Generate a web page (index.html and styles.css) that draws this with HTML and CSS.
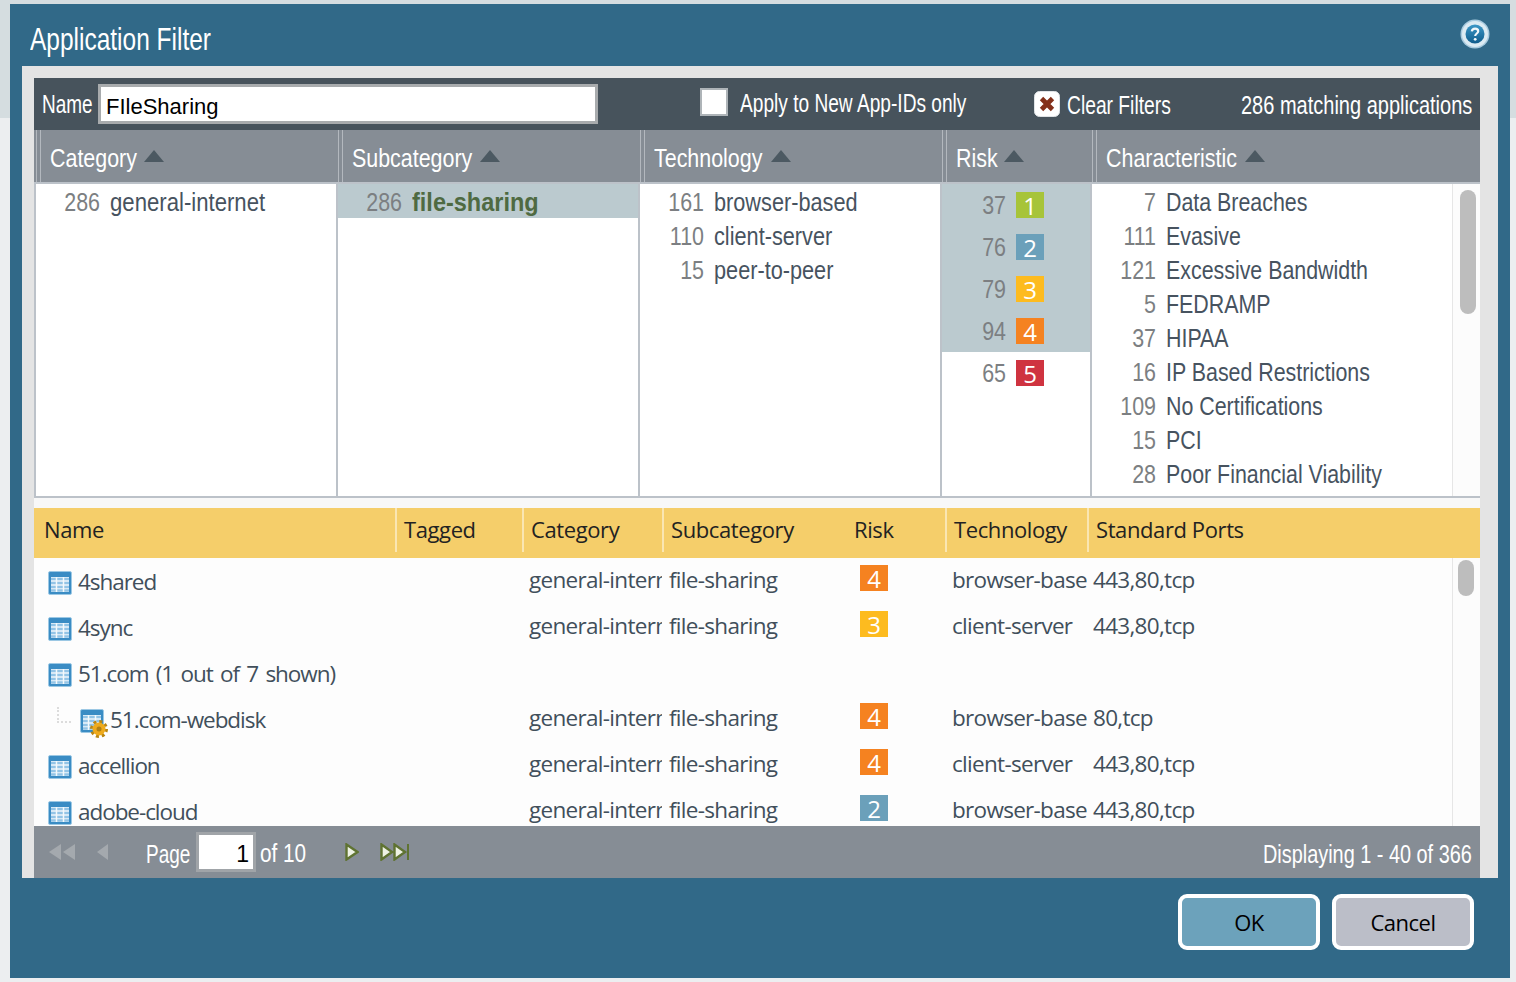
FILE: index.html
```html
<!DOCTYPE html>
<html lang="en">

<head>
    <meta charset="UTF-8">
    <title>Application Filter</title>
    <link rel="stylesheet" href="styles.css">
</head>

<body>
    <svg class="defs" width="0" height="0">
        <defs>
            <linearGradient id="help-fill" x1="0" y1="0" x2="0" y2="1">
                <stop offset="0" stop-color="#3c97c6"/>
                <stop offset="1" stop-color="#0f5c8c"/>
            </linearGradient>
        </defs>
        <symbol id="tbl" viewBox="0 0 24 24">
            <rect x="0.5" y="0.5" width="23" height="23" rx="1.5" fill="#3a8cc4" stroke="#9cc8e4"/>
            <rect x="3" y="6" width="18" height="15" fill="#eef6fb"/>
            <path d="M3 8h18M3 12h18M3 16h18M3 19.500h18" stroke="#93c4e6" stroke-width="2.400"/>
            <path d="M8.500 6v15M15.500 6v15" stroke="#f4f9fc" stroke-width="1.500"/>
        </symbol>
    </svg>

    <div class="dialog">
        <div class="title-bar">
            <span class="title">Application Filter</span>
            <svg class="help" width="30" height="30" viewBox="0 0 30 30">
                <circle cx="15" cy="15" r="14.500" fill="#a9cbdf"/>
                <circle cx="15" cy="15" r="13" fill="#dcebf3"/>
                <circle cx="15" cy="15" r="9.500" fill="url(#help-fill)"/>
                <path d="M11.800 12.400c.3-2 1.600-2.800 3.300-2.800 1.800 0 3.100 1 3.100 2.600 0 2.300-3 2.300-3 4.800" fill="none" stroke="#f2f8fb" stroke-width="2.200"/>
                <circle cx="15.200" cy="20.300" r="1.400" fill="#f2f8fb"/>
            </svg>
        </div>

        <div class="dialog-body">
            <!-- filter toolbar -->
            <div class="toolbar">
                <span class="bar-label w-name">Name</span>
                <div class="name-input">FIleSharing</div>
                <span class="checkbox"></span>
                <span class="bar-label w-apply">Apply to New App-IDs only</span>
                <svg class="clear-icon" width="26" height="26" viewBox="0 0 26 26">
                    <rect x="0.500" y="0.500" width="25" height="25" rx="5" fill="#fff" stroke="#dfe3e6"/>
                    <path d="M7.500 7.500l11 11M18.500 7.500l-11 11" stroke="#84301a" stroke-width="4.800"/>
                </svg>
                <span class="bar-label w-clear">Clear Filters</span>
                <span class="bar-label w-match">286 matching applications</span>
            </div>

            <!-- filter browser -->
            <div class="browser-head">
                <div class="head-cell"><span class="head-label w-cat">Category</span><i class="sort"></i></div>
                <div class="head-cell"><span class="head-label w-sub">Subcategory</span><i class="sort"></i></div>
                <div class="head-cell"><span class="head-label w-tech">Technology</span><i class="sort"></i></div>
                <div class="head-cell"><span class="head-label w-risk">Risk</span><i class="sort"></i></div>
                <div class="head-cell"><span class="head-label w-char">Characteristic</span><i class="sort"></i></div>
            </div>
            <div class="browser">
                <div class="facet">
                    <div class="facet-row"><span class="count">286</span><span class="facet-name wide">general-internet</span></div>
                </div>
                <div class="facet">
                    <div class="facet-row picked first-pick"><span class="count">286</span><b class="picked-name">file-sharing</b></div>
                </div>
                <div class="facet">
                    <div class="facet-row"><span class="count">161</span><span class="facet-name">browser-based</span></div>
                    <div class="facet-row"><span class="count">110</span><span class="facet-name">client-server</span></div>
                    <div class="facet-row"><span class="count">15</span><span class="facet-name">peer-to-peer</span></div>
                </div>
                <div class="facet">
                    <div class="risk-row picked"><span class="count">37</span><span class="risk r1">1</span></div>
                    <div class="risk-row picked"><span class="count">76</span><span class="risk r2">2</span></div>
                    <div class="risk-row picked"><span class="count">79</span><span class="risk r3">3</span></div>
                    <div class="risk-row picked"><span class="count">94</span><span class="risk r4">4</span></div>
                    <div class="risk-row"><span class="count">65</span><span class="risk r5">5</span></div>
                </div>
                <div class="facet facet-scroll">
                    <div class="facet-list">
                        <div class="facet-row"><span class="count">7</span><span class="facet-name">Data Breaches</span></div>
                        <div class="facet-row"><span class="count">111</span><span class="facet-name">Evasive</span></div>
                        <div class="facet-row"><span class="count">121</span><span class="facet-name">Excessive Bandwidth</span></div>
                        <div class="facet-row"><span class="count">5</span><span class="facet-name">FEDRAMP</span></div>
                        <div class="facet-row"><span class="count">37</span><span class="facet-name">HIPAA</span></div>
                        <div class="facet-row"><span class="count">16</span><span class="facet-name">IP Based Restrictions</span></div>
                        <div class="facet-row"><span class="count">109</span><span class="facet-name">No Certifications</span></div>
                        <div class="facet-row"><span class="count">15</span><span class="facet-name">PCI</span></div>
                        <div class="facet-row"><span class="count">28</span><span class="facet-name">Poor Financial Viability</span></div>
                    </div>
                    <div class="gutter"><div class="thumb thumb-top"></div></div>
                </div>
            </div>

            <div class="spacer"></div>

            <!-- matching applications -->
            <div class="app-head">
                <div class="app-th">Name</div>
                <div class="app-th">Tagged</div>
                <div class="app-th">Category</div>
                <div class="app-th">Subcategory</div>
                <div class="app-th th-risk">Risk</div>
                <div class="app-th">Technology</div>
                <div class="app-th">Standard Ports</div>
            </div>
            <div class="app-rows">
                <div class="app-list">
                    <div class="app-row">
                        <div class="app-name"><svg class="tbl-icon"><use href="#tbl"/></svg>4shared</div>
                        <div></div>
                        <div class="clip">general-internet</div>
                        <div class="clip">file-sharing</div>
                        <div class="risk-cell"><span class="risk r4">4</span></div>
                        <div class="clip">browser-based</div>
                        <div class="ports">443,80,tcp</div>
                    </div>
                    <div class="app-row">
                        <div class="app-name"><svg class="tbl-icon"><use href="#tbl"/></svg>4sync</div>
                        <div></div>
                        <div class="clip">general-internet</div>
                        <div class="clip">file-sharing</div>
                        <div class="risk-cell"><span class="risk r3">3</span></div>
                        <div class="clip">client-server</div>
                        <div class="ports">443,80,tcp</div>
                    </div>
                    <div class="app-row">
                        <div class="app-name"><svg class="tbl-icon"><use href="#tbl"/></svg>51.com (1 out of 7 shown)</div>
                    </div>
                    <div class="app-row">
                        <div class="app-name child">
                            <span class="tree-line"></span>
                            <span class="icon-wrap">
                                <svg class="tbl-icon"><use href="#tbl"/></svg>
                                <svg class="gear" width="18" height="18" viewBox="0 0 18 18">
                                    <circle cx="9" cy="9" r="7.500" fill="none" stroke="#b98510" stroke-width="3" stroke-dasharray="3 2.900"/>
                                    <circle cx="9" cy="9" r="6.500" fill="#eeaa1c"/>
                                    <circle cx="9" cy="9" r="2.500" fill="#b07f14"/>
                                </svg>
                            </span>51.com-webdisk
                        </div>
                        <div></div>
                        <div class="clip">general-internet</div>
                        <div class="clip">file-sharing</div>
                        <div class="risk-cell"><span class="risk r4">4</span></div>
                        <div class="clip">browser-based</div>
                        <div class="ports">80,tcp</div>
                    </div>
                    <div class="app-row">
                        <div class="app-name"><svg class="tbl-icon"><use href="#tbl"/></svg>accellion</div>
                        <div></div>
                        <div class="clip">general-internet</div>
                        <div class="clip">file-sharing</div>
                        <div class="risk-cell"><span class="risk r4">4</span></div>
                        <div class="clip">client-server</div>
                        <div class="ports">443,80,tcp</div>
                    </div>
                    <div class="app-row">
                        <div class="app-name"><svg class="tbl-icon"><use href="#tbl"/></svg>adobe-cloud</div>
                        <div></div>
                        <div class="clip">general-internet</div>
                        <div class="clip">file-sharing</div>
                        <div class="risk-cell"><span class="risk r2">2</span></div>
                        <div class="clip">browser-based</div>
                        <div class="ports">443,80,tcp</div>
                    </div>
                </div>
                <div class="gutter"><div class="thumb thumb-apps"></div></div>
            </div>

            <!-- pager -->
            <div class="pager">
                <svg class="pg-first" width="28" height="16" viewBox="0 0 28 16">
                    <path d="M13 0v16L1 8zM27 0v16L15 8z" fill="#a4a9ae"/>
                </svg>
                <svg class="pg-prev" width="12" height="16" viewBox="0 0 12 16">
                    <path d="M11 0v16L0 8z" fill="#a4a9ae"/>
                </svg>
                <span class="bar-label w-page">Page</span>
                <div class="pg-input">1</div>
                <span class="bar-label w-of">of 10</span>
                <svg class="pg-next" width="14" height="18" viewBox="0 0 14 18">
                    <path d="M1.500 1.500v15L12.500 9z" fill="#eef2e4" stroke="#5f7332" stroke-width="2.400"/>
                </svg>
                <svg class="pg-last" width="30" height="18" viewBox="0 0 30 18">
                    <path d="M1.500 1.500v15L12 9zM14.500 1.500v15L25 9z" fill="#eef2e4" stroke="#5f7332" stroke-width="2.400"/>
                    <path d="M28 1v16" stroke="#5f7332" stroke-width="2"/>
                </svg>
                <span class="bar-label w-total">Displaying 1 - 40 of 366</span>
            </div>
        </div>

        <div class="footer">
            <button class="btn btn-ok">OK</button>
            <button class="btn btn-cancel">Cancel</button>
        </div>
    </div>
</body>

</html>
```

FILE: styles.css
```css
/* page */
body {
    margin: 0;
    height: 982px;
    overflow: hidden;
    background: linear-gradient(#d5dde0 118px, #eceef0 118px);
    font-family: "Open Sans", "Liberation Sans", sans-serif;
}

svg {
    flex: none;
}

.defs {
    position: absolute;
}

.dialog {
    width: 1500px;
    height: 974px;
    margin: 4px 0 0 10px;
    background: #316988;
    display: flex;
    flex-direction: column;
}

.title-bar {
    height: 62px;
    display: flex;
    align-items: center;
    justify-content: space-between;
    padding: 0 20px;
}

/* the squeezed text: layout width is set by hand, the glyphs are scaled to fit */
.title,
.bar-label,
.head-label,
.facet-name,
.picked-name,
.count {
    display: inline-block;
    font-family: "Liberation Sans", sans-serif;
    white-space: nowrap;
    transform-origin: left center;
}

.title {
    font-size: 32px;
    color: #fff;
    margin-top: 9px;
    transform: scaleX(.765);
}

.help {
    margin-top: -2px;
}

.dialog-body {
    margin-left: 12px;
    width: 1476px;
    height: 812px;
    box-sizing: border-box;
    padding: 12px 18px 0 12px;
    background: #e4e4e4;
    display: flex;
    flex-direction: column;
}

/* toolbar */
.toolbar {
    height: 52px;
    background: #47535c;
    display: flex;
    align-items: center;
    padding: 0 8px;
}

.bar-label {
    font-size: 25px;
    color: #fff;
    flex: none;
}

.w-name {
    width: 50px;
    transform: scaleX(.76);
}

.w-apply {
    width: 227px;
    margin: -2px 0 0 12px;
    transform: scaleX(.765);
}

.w-clear {
    width: 103px;
    margin: 3px 0 0 7px;
    transform: scaleX(.77);
}

.w-match {
    width: 231px;
    margin: 3px 0 0 auto;
    transform: scaleX(.8);
}

.name-input {
    width: 489px;
    height: 34px;
    margin-left: 6px;
    border: 3px solid #a8abad;
    background: #fff;
    font-family: "Liberation Sans", sans-serif;
    font-size: 22px;
    line-height: 40px;
    padding-left: 5px;
    color: #000;
}

.checkbox {
    width: 24px;
    height: 24px;
    margin: -4px 0 0 102px;
    background: #fff;
    border: 2px solid #aeb4b8;
    flex: none;
}

.clear-icon {
    margin-left: 67px;
}

/* filter browser */
.browser-head,
.browser {
    display: grid;
    grid-template-columns: 302px 302px 302px 150px 390px;
}

.browser-head {
    height: 52px;
    background: #868d95;
}

.head-cell {
    display: flex;
    align-items: center;
    padding-left: 16px;
    background: linear-gradient(to right, transparent 2px, #b3b8be 2px, #b3b8be 3px, transparent 3px, transparent 6px, #b3b8be 6px, #b3b8be 7px, transparent 7px);
}

.head-label {
    font-size: 25px;
    color: #fff;
    margin-top: 4px;
    transform: scaleX(.857);
}

.w-cat { width: 86px; }
.w-sub { width: 120px; }
.w-tech { width: 109px; }
.w-risk { width: 40px; }
.w-char { width: 131px; }

.sort {
    width: 0;
    height: 0;
    margin: 0 0 0 8px;
    border-left: 10px solid transparent;
    border-right: 10px solid transparent;
    border-bottom: 12px solid #4c5962;
}

.browser {
    height: 316px;
    box-sizing: border-box;
    background: #fff;
    border-top: 2px solid #bcc2c9;
    border-bottom: 2px solid #bcc2c9;
}

.facet {
    border-left: 2px solid #bcc2c9;
    font-size: 25px;
    color: #47535f;
}

.facet-row,
.risk-row {
    display: flex;
    align-items: center;
    height: 34px;
}

.risk-row {
    height: 42px;
}

.count {
    width: 64px;
    margin-right: 10px;
    text-align: right;
    color: #7c7f82;
    transform: scaleX(.857);
    transform-origin: right center;
    flex: none;
}

.facet-name,
.picked-name {
    transform: scaleX(.868);
}

.facet-list .facet-name {
    transform: scaleX(.855);
}

.facet-name.wide {
    transform: scaleX(.886);
}

.facet-row .count,
.facet-name,
.picked-name {
    margin-top: 3px;
}

.picked {
    background: #bbcacf;
}

.picked-name {
    color: #4f6a42;
    transform: scaleX(.94);
}

.risk {
    display: inline-block;
    width: 28px;
    height: 26px;
    line-height: 28px;
    text-align: center;
    color: #fff;
    font-family: "Open Sans", sans-serif;
    font-size: 24px;
    letter-spacing: 0;
}

.r1 { background: #a7c439; }
.r2 { background: #6ba0ba; }
.r3 { background: #fdbb1f; }
.r4 { background: #f58220; }
.r5 { background: #cf3340; }

.facet-scroll {
    display: flex;
}

.facet-list {
    flex: 1;
}

.gutter {
    width: 27px;
    flex: none;
    border-left: 1px solid #e6e6e6;
    background: #fcfcfc;
}

.thumb {
    width: 16px;
    margin-left: 7px;
    background: #bdbdbd;
    border-radius: 8px;
}

.thumb-top {
    height: 124px;
    margin-top: 6px;
}

.thumb-apps {
    height: 36px;
    margin: 2px 0 0 5px;
}

.spacer {
    height: 10px;
    background: #f8f8f8;
}

/* application table */
.app-head,
.app-row {
    display: grid;
    grid-template-columns: 361px 127px 140px 143px 140px 142px 365px;
}

.app-head {
    height: 50px;
    background: #f5ce6a;
    font-size: 22px;
    letter-spacing: -.4px;
    color: #222;
}

.app-th {
    padding-left: 7px;
    line-height: 42px;
    height: 44px;
    border-left: 2px solid #fae6b2;
    box-sizing: border-box;
}

.app-th:first-child {
    border-left: none;
    padding-left: 10px;
}

.th-risk {
    border-left: none;
    padding-left: 49px;
}

.app-rows {
    height: 268px;
    display: flex;
    overflow: hidden;
    background: #fdfdfd;
}

.app-list {
    width: 1418px;
    flex: none;
    margin-top: -2px;
    font-size: 22.500px;
    letter-spacing: -.7px;
    word-spacing: 2.500px;
    color: #414f5b;
}

.app-row {
    height: 46px;
    align-items: center;
    white-space: nowrap;
}

.app-name {
    display: flex;
    align-items: center;
    padding: 4px 0 0 14px;
    letter-spacing: -1.050px;
}

.clip {
    overflow: hidden;
    padding-left: 7px;
}

.ports {
    padding-left: 6px;
}

.risk-cell {
    padding-left: 55px;
}

.tbl-icon {
    width: 24px;
    height: 24px;
    margin: 4px 6px 0 0;
}

.child {
    padding-left: 23px;
}

.tree-line {
    width: 14px;
    height: 16px;
    margin: -8px 9px 0 0;
    border-left: 2px dotted #dcdcdc;
    border-bottom: 2px dotted #dcdcdc;
    box-sizing: border-box;
}

.icon-wrap {
    position: relative;
    display: flex;
}

.gear {
    position: absolute;
    left: 10px;
    top: 15px;
}

/* pager */
.pager {
    height: 52px;
    background: #868d95;
    display: flex;
    align-items: center;
    padding: 0 8px 0 14px;
}

.pg-prev {
    margin-left: 21px;
}

.w-page {
    width: 44px;
    margin: 4px 0 0 37px;
    transform: scaleX(.76);
}

.pg-input {
    width: 50px;
    height: 34px;
    margin-left: 6px;
    border: 3px solid #a0a4a8;
    background: #fff;
    text-align: right;
    line-height: 38px;
    padding-right: 4px;
    font-family: "Liberation Sans", sans-serif;
    font-size: 23px;
    color: #000;
}

.w-of {
    width: 46px;
    margin: 3px 0 0 4px;
    transform: scaleX(.83);
}

.pg-next {
    margin-left: 39px;
}

.pg-last {
    margin-left: 21px;
}

.w-total {
    width: 209px;
    margin: 4px 0 0 auto;
    transform: scaleX(.795);
}

/* footer */
.footer {
    flex: 1;
    display: flex;
    justify-content: flex-end;
    gap: 12px;
    padding: 16px 36px 0 0;
}

.btn {
    width: 142px;
    height: 56px;
    border: 4px solid #fff;
    border-radius: 9px;
    font-family: "Open Sans", sans-serif;
    font-size: 22px;
    letter-spacing: -.5px;
    color: #000;
}

.btn-ok {
    background: #6ca2bb;
}

.btn-cancel {
    background: #bbbec8;
}
```
